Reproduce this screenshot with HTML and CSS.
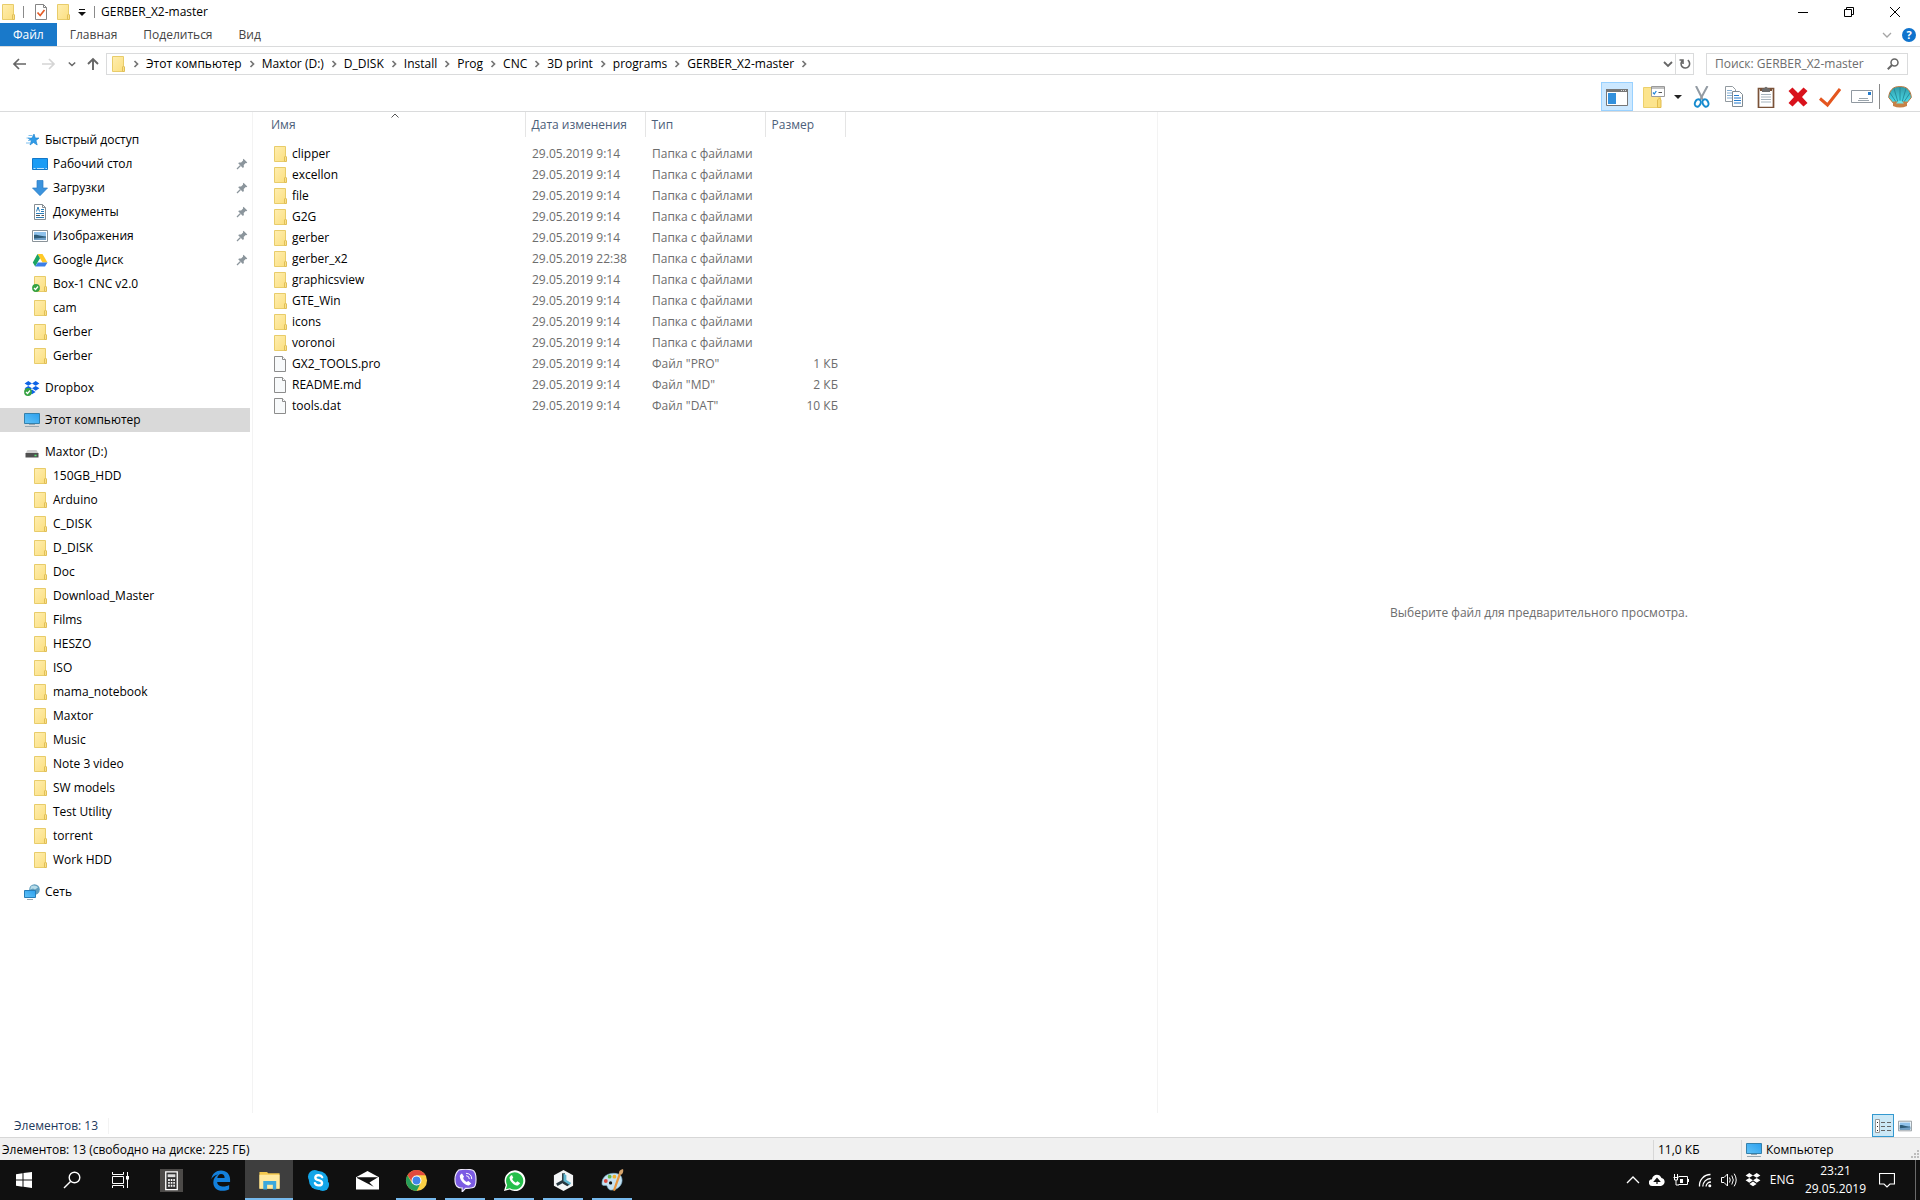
FILE: index.html
```html
<!DOCTYPE html>
<html lang="ru">
<head>
<meta charset="utf-8">
<title>GERBER_X2-master</title>
<link rel="stylesheet" href="styles.css">
</head>
<body>
<svg class="sprite" aria-hidden="true">
  <defs>
    <linearGradient id="g-folder" x1="0" y1="0" x2="1" y2="1"><stop offset="0" stop-color="#ffeeb0"/><stop offset="1" stop-color="#fbdf80"/></linearGradient>
    <linearGradient id="g-screen" x1="0" y1="1" x2="1" y2="0"><stop offset="0" stop-color="#62c3f7"/><stop offset="1" stop-color="#2b9fee"/></linearGradient>
    <linearGradient id="g-shell" x1="0" y1="0" x2="0" y2="1"><stop offset="0" stop-color="#2f9aa8"/><stop offset="1" stop-color="#4fe3f0"/></linearGradient>
  </defs>
  <symbol id="i-folder" viewBox="0 0 16 16"><path d="M2.500.5h11v15h-11z" fill="url(#g-folder)" stroke="#e8cc6a"/><path d="M12.500 15.500v-4.500l1-1 1 1v4.500z" fill="#fbe08a" stroke="#e0bf57"/></symbol>
  <symbol id="i-file" viewBox="0 0 16 16"><path d="M2.500.5h8l3 3v12h-11z" fill="#f8fafb" stroke="#8c8c8c"/><path d="M10.500.5v3h3" fill="#fff" stroke="#8c8c8c"/></symbol>
  <symbol id="i-star" viewBox="0 0 16 16"><path d="M10 2l1.300 4H15l-3 2.500 1.200 4.500-3.700-2.500L6 13l1.300-4.200L4 6.200l4-.1z" fill="#2f9be8" stroke="#1580cc" stroke-width=".6"/><path d="M4.500 3.500h4M2.500 6h3M4 8.500h2.500M2 11h4.500" stroke="#7fc0ef"/></symbol>
  <symbol id="i-desktop" viewBox="0 0 16 16"><path d="M.5 2.500h15v11H.5z" fill="#1a9cf5" stroke="#1277c8"/><path d="M1.500 12.500h2M5 12.500h7M13.500 12.500h1.500" stroke="#bfe3fb"/></symbol>
  <symbol id="i-down" viewBox="0 0 16 16"><path d="M5 .5h6v7.500h4.500L8 15.700.5 8H5z" fill="#3b93dd" stroke="#2a7cc4" stroke-width=".7"/></symbol>
  <symbol id="i-doc" viewBox="0 0 16 16"><path d="M2.500.5h8l3 3v12h-11z" fill="#fff" stroke="#858d92"/><path d="M10.500.5v3h3" fill="none" stroke="#858d92"/><path d="M4.500 7.500L6 3l1.500 4.500M9 5.500h3M9 7.500h3M4 9.500h8M4 13.500h8" stroke="#2b7db8" fill="none"/><path d="M4 11.500h4M9.500 11.500H12" stroke="#555"/></symbol>
  <symbol id="i-pic" viewBox="0 0 16 16"><path d="M.5 2.500h15v11H.5z" fill="#fff" stroke="#8a9399"/><path d="M2 4h12v8H2z" fill="#8fc1ea"/><path d="M2 7c3-1 5 1 12 1.500V12H2z" fill="#2d5b78"/><path d="M2 10.500l12-1V12H2z" fill="#70a0c8"/></symbol>
  <symbol id="i-drive" viewBox="0 0 16 16"><path d="M5.500 2h5l5 8.500h-5z" fill="#ffc928"/><path d="M5.500 2L8 6.300 3.200 14.500.8 10.500z" fill="#1ba462"/><path d="M5.800 10.500h9.700L13 14.500H3.200z" fill="#3b7ee8"/></symbol>
  <symbol id="i-pin" viewBox="0 0 12 12"><path d="M7.500.8l3.800 3.800-1 .6-.6-.1-2 2 .2 2-1 .9L2.200 5.300l.9-.9 2 .2 2-2-.2-.8z" fill="#8b959c"/><path d="M4.500 7.500L1 11" stroke="#8b959c" stroke-width="1.300"/></symbol>
  <symbol id="i-ok" viewBox="0 0 16 16"><circle cx="4" cy="12" r="3.900" fill="#36a243"/><path d="M2 12l1.500 1.500L6 10.500" stroke="#fff" stroke-width="1.300" fill="none"/></symbol>
  <symbol id="i-boxes" viewBox="0 0 16 16"><path d="M4.300 1L8 3.400 4.300 5.800.6 3.400zM11.700 1l3.700 2.400-3.700 2.400L8 3.400zM4.300 6L8 8.300l-3.700 2.400L.6 8.300zM11.700 6l3.700 2.300-3.700 2.400L8 8.300zM8 9.600l3.600 2.300L8 14.300l-3.600-2.400z" fill="currentColor"/></symbol>
  <symbol id="i-pc" viewBox="0 0 16 16"><path d="M.5 1.500h15v10H.5z" fill="url(#g-screen)" stroke="#3580ab"/><path d="M5 12.500h6M1 14.500h14" stroke="#98a7b0"/></symbol>
  <symbol id="i-hdd" viewBox="0 0 16 16"><path d="M3.500 6h9l2 3.500h-13z" fill="#cfcfcf"/><path d="M1.500 9h13v4.500h-13z" fill="#505050"/><path d="M10.500 11.500h2" stroke="#52f070" stroke-width="1.500"/></symbol>
  <symbol id="i-net" viewBox="0 0 16 16"><circle cx="10.500" cy="5.500" r="5.300" fill="#5f9dbd"/><path d="M7 2.500c2-2 6-1 7 1l-3 2-2-1-3 1z" fill="#b7dce9"/><path d="M.5 6.500h11v7H.5z" fill="url(#g-screen)" stroke="#267db7"/><path d="M3 15.500h6" stroke="#98a7b0"/></symbol>
  <symbol id="i-chev" viewBox="0 0 8 8"><path d="M2.500 1l3 3-3 3" fill="none" stroke="#757575" stroke-width="1.700"/></symbol>
  <symbol id="i-chevdown" viewBox="0 0 10 10"><path d="M1 3l4 4 4-4" fill="none" stroke="currentColor" stroke-width="1.800"/></symbol>
</svg>

<header class="titlebar">
  <div class="quick">
    <svg class="ic"><use href="#i-folder"/></svg>
    <i class="tick"></i>
    <button class="bare" aria-label="Свойства"><svg class="ic" viewBox="0 0 16 16"><path d="M2.500.5h8l3 3v12h-11z" fill="#fff" stroke="#858585"/><path d="M10.500.5v3h3" fill="none" stroke="#858585"/><path d="M4.500 8.500l2.700 3L11.500 6" fill="none" stroke="#e45b26" stroke-width="1.700"/></svg></button>
    <button class="bare" aria-label="Новая папка"><svg class="ic"><use href="#i-folder"/></svg></button>
    <button class="bare" aria-label="Настройка панели"><svg class="ic10" viewBox="0 0 10 10"><path d="M2 2.500h6" stroke="#111"/><path d="M1 5h8L5 9z" fill="#111"/></svg></button>
    <i class="tick"></i>
  </div>
  <h1>GERBER_X2-master</h1>
  <div class="winbtns">
    <button aria-label="Свернуть"><svg viewBox="0 0 10 10"><path d="M0 5.500h10" stroke="#000"/></svg></button>
    <button aria-label="Восстановить"><svg viewBox="0 0 10 10"><path d="M.5 2.500h7v7h-7zM2.500 2.500v-2h7v7h-2" fill="none" stroke="#000"/></svg></button>
    <button aria-label="Закрыть"><svg viewBox="0 0 10 10"><path d="M0 0l10 10M10 0L0 10" stroke="#000"/></svg></button>
  </div>
</header>

<nav class="tabs">
  <button class="tab active">Файл</button>
  <button class="tab">Главная</button>
  <button class="tab">Поделиться</button>
  <button class="tab">Вид</button>
  <div class="help">
    <button class="bare pale" aria-label="Развернуть ленту"><svg class="ic10" viewBox="0 0 10 10"><path d="M1 3l4 4 4-4" fill="none" stroke="#a5a5a5" stroke-width="1.300"/></svg></button>
    <button class="qmark" aria-label="Справка">?</button>
  </div>
</nav>

<div class="navrow">
  <button class="bare arrow" aria-label="Назад"><svg viewBox="0 0 14 12"><path d="M7 1L2 6l5 5M2 6h12" fill="none" stroke="#666" stroke-width="1.700"/></svg></button>
  <button class="bare arrow" aria-label="Вперед"><svg viewBox="0 0 14 12"><path d="M7 1l5 5-5 5M12 6H0" fill="none" stroke="#d5d5d5" stroke-width="1.700"/></svg></button>
  <button class="bare recent" aria-label="Последние"><svg viewBox="0 0 10 10"><use href="#i-chevdown"/></svg></button>
  <button class="bare up" aria-label="Вверх"><svg viewBox="0 0 12 14"><path d="M1 7l5-5 5 5M6 2v11" fill="none" stroke="#666" stroke-width="1.900"/></svg></button>
  <div class="address">
    <svg class="ic"><use href="#i-folder"/></svg>
    <svg class="chev"><use href="#i-chev"/></svg>
    <a href="#">Этот компьютер</a><svg class="chev"><use href="#i-chev"/></svg>
    <a href="#">Maxtor (D:)</a><svg class="chev"><use href="#i-chev"/></svg>
    <a href="#">D_DISK</a><svg class="chev"><use href="#i-chev"/></svg>
    <a href="#">Install</a><svg class="chev"><use href="#i-chev"/></svg>
    <a href="#">Prog</a><svg class="chev"><use href="#i-chev"/></svg>
    <a href="#">CNC</a><svg class="chev"><use href="#i-chev"/></svg>
    <a href="#">3D print</a><svg class="chev"><use href="#i-chev"/></svg>
    <a href="#">programs</a><svg class="chev"><use href="#i-chev"/></svg>
    <a href="#">GERBER_X2-master</a><svg class="chev"><use href="#i-chev"/></svg>
    <div class="addrbtns">
      <button class="bare drop" aria-label="Предыдущие расположения"><svg class="ic10"><use href="#i-chevdown"/></svg></button>
      <button class="bare refresh" aria-label="Обновить"><svg viewBox="0 0 12 12"><path d="M8.800 2.200A4.300 4.300 0 1 1 3.500 2.500M4 6V2H.5" fill="none" stroke="#666" stroke-width="1.600"/></svg></button>
    </div>
  </div>
  <div class="search">
    <input type="search" aria-label="Поиск" placeholder="Поиск: GERBER_X2-master">
    <svg class="lens" viewBox="0 0 12 12"><circle cx="7.500" cy="4.500" r="3.500" fill="none" stroke="#666" stroke-width="1.500"/><path d="M5 7L.8 11.200" stroke="#666" stroke-width="2"/></svg>
  </div>
</div>

<div class="toolbar">
  <button class="tool pressed" aria-label="Область навигации"><svg viewBox="0 0 22 18"><path d="M.5 1.500h21v16H.5z" fill="#fff" stroke="#777"/><path d="M0 1h22v3H0z" fill="#777"/><path d="M15 2.500h5" stroke="#ddd" stroke-dasharray="1 1"/><path d="M2 5h8v11H2z" fill="#3290dc"/></svg></button>
  <button class="tool" aria-label="Параметры"><svg viewBox="0 0 22 22"><path d="M.5 1.500h12l1 9 4 1v10H.5z" fill="#fce48d" stroke="#ecd06c"/><path d="M14.500 21.500V14l2-2 1.500 2v7.500z" fill="#f8dc77" stroke="#e2bc50"/><path d="M8.500.5h13v10h-13z" fill="#fff" stroke="#9b9b9b"/><path d="M8 2h14" stroke="#858585"/><path d="M10 6.500l1.300 1.500 2-3" fill="none" stroke="#2788d8" stroke-width="1.300"/><path d="M15.500 6.500h3.500" stroke="#555"/></svg></button>
  <button class="tool caret" aria-label="Еще"><svg viewBox="0 0 8 4"><path d="M0 0h8L4 4z" fill="#222"/></svg></button>
  <button class="tool" aria-label="Вырезать"><svg viewBox="0 0 22 22"><path d="M5 0l7 14M16.500 0L9 14" stroke="#939ba3" stroke-width="2"/><ellipse cx="6.800" cy="17" rx="2.800" ry="3.800" transform="rotate(25 6.800 17)" fill="none" stroke="#168bcf" stroke-width="2"/><ellipse cx="14.500" cy="17" rx="2.800" ry="3.800" transform="rotate(-25 14.500 17)" fill="none" stroke="#168bcf" stroke-width="2"/></svg></button>
  <button class="tool" aria-label="Копировать"><svg viewBox="0 0 22 22"><path d="M2.500.5h7l3 3v12h-10z" fill="#fff" stroke="#929aa0"/><path d="M4 4.500h5M4 7h6M4 9.500h6M4 12h6" stroke="#83aed3"/><path d="M9.500 5.500h7l3 3v12h-10z" fill="#fff" stroke="#7f8a92"/><path d="M11 9.500h5M11 12h7M11 14.500h7M11 17h7" stroke="#257bcb"/></svg></button>
  <button class="tool" aria-label="Вставить"><svg viewBox="0 0 22 22"><path d="M3.500 2.500h15v19h-15z" fill="#fff" stroke="#7a5238" stroke-width="1.700"/><path d="M5 3h12v2H5z" fill="#7a5238"/><path d="M6 8.500h10M6 11h10M6 13.500h10M6 16h10" stroke="#a8b5bf"/><path d="M7 6V2.500h2Q11-1 13 2.500h2V6z" fill="#6d6d6d"/></svg></button>
  <button class="tool" aria-label="Удалить"><svg viewBox="0 0 22 22"><path d="M1.500 5L5.500 1.500l5.500 5.500 5.500-5.500L20.500 5 15 11l5.500 6-4 3.500-5.500-5.500-5.500 5.500L1.500 17 7 11z" fill="#d9121c"/></svg></button>
  <button class="tool" aria-label="Свойства"><svg viewBox="0 0 22 22"><path d="M1 12.500L8.500 19 21 3" fill="none" stroke="#e4561f" stroke-width="3"/></svg></button>
  <button class="tool" aria-label="Отправить"><svg viewBox="0 0 22 22"><path d="M.5 4.500h21v12H.5z" fill="#fff" stroke="#9098a0"/><path d="M17 6h3v3h-3z" fill="#257bcb"/><path d="M8 12.500h9M7 14.500h11" stroke="#9aa4ac"/></svg></button>
  <i class="divider"></i>
  <button class="tool" aria-label="Classic Shell"><svg class="shell" viewBox="0 0 24 22"><path d="M12 .7C5 0 1 5 .7 11.500L6 18h12l5.300-6.500C23 5 19 0 12 .7z" fill="url(#g-shell)" stroke="#ba743b"/><path d="M12 18V1M10.500 18L6 2.500M13.500 18L18 2.500M9.500 18L2 7M14.500 18L22 7" stroke="#21808f" stroke-width=".8"/><path d="M5 15.500h14V20q-7 3-14 0z" fill="#c78146"/><path d="M8 17.500q4-6 8 0z" fill="#6be9ee"/></svg></button>
</div>

<main class="content">
  <aside class="tree">
    <a class="node root" href="#"><svg class="ic"><use href="#i-star"/></svg>Быстрый доступ</a>
    <a class="node" href="#"><svg class="ic"><use href="#i-desktop"/></svg>Рабочий стол<svg class="pin"><use href="#i-pin"/></svg></a>
    <a class="node" href="#"><svg class="ic"><use href="#i-down"/></svg>Загрузки<svg class="pin"><use href="#i-pin"/></svg></a>
    <a class="node" href="#"><svg class="ic"><use href="#i-doc"/></svg>Документы<svg class="pin"><use href="#i-pin"/></svg></a>
    <a class="node" href="#"><svg class="ic"><use href="#i-pic"/></svg>Изображения<svg class="pin"><use href="#i-pin"/></svg></a>
    <a class="node" href="#"><svg class="ic"><use href="#i-drive"/></svg>Google Диск<svg class="pin"><use href="#i-pin"/></svg></a>
    <a class="node" href="#"><svg class="ic"><use href="#i-folder"/><use href="#i-ok"/></svg>Box-1 CNC v2.0</a>
    <a class="node" href="#"><svg class="ic"><use href="#i-folder"/></svg>cam</a>
    <a class="node" href="#"><svg class="ic"><use href="#i-folder"/></svg>Gerber</a>
    <a class="node" href="#"><svg class="ic"><use href="#i-folder"/></svg>Gerber</a>
    <a class="node root gap" href="#"><svg class="ic blue"><use href="#i-boxes"/><use href="#i-ok"/></svg>Dropbox</a>
    <a class="node root gap selected" href="#"><svg class="ic"><use href="#i-pc"/></svg>Этот компьютер</a>
    <a class="node root gap" href="#"><svg class="ic"><use href="#i-hdd"/></svg>Maxtor (D:)</a>
    <a class="node" href="#"><svg class="ic"><use href="#i-folder"/></svg>150GB_HDD</a>
    <a class="node" href="#"><svg class="ic"><use href="#i-folder"/></svg>Arduino</a>
    <a class="node" href="#"><svg class="ic"><use href="#i-folder"/></svg>C_DISK</a>
    <a class="node" href="#"><svg class="ic"><use href="#i-folder"/></svg>D_DISK</a>
    <a class="node" href="#"><svg class="ic"><use href="#i-folder"/></svg>Doc</a>
    <a class="node" href="#"><svg class="ic"><use href="#i-folder"/></svg>Download_Master</a>
    <a class="node" href="#"><svg class="ic"><use href="#i-folder"/></svg>Films</a>
    <a class="node" href="#"><svg class="ic"><use href="#i-folder"/></svg>HESZO</a>
    <a class="node" href="#"><svg class="ic"><use href="#i-folder"/></svg>ISO</a>
    <a class="node" href="#"><svg class="ic"><use href="#i-folder"/></svg>mama_notebook</a>
    <a class="node" href="#"><svg class="ic"><use href="#i-folder"/></svg>Maxtor</a>
    <a class="node" href="#"><svg class="ic"><use href="#i-folder"/></svg>Music</a>
    <a class="node" href="#"><svg class="ic"><use href="#i-folder"/></svg>Note 3 video</a>
    <a class="node" href="#"><svg class="ic"><use href="#i-folder"/></svg>SW models</a>
    <a class="node" href="#"><svg class="ic"><use href="#i-folder"/></svg>Test Utility</a>
    <a class="node" href="#"><svg class="ic"><use href="#i-folder"/></svg>torrent</a>
    <a class="node" href="#"><svg class="ic"><use href="#i-folder"/></svg>Work HDD</a>
    <a class="node root gap" href="#"><svg class="ic"><use href="#i-net"/></svg>Сеть</a>
  </aside>

  <section class="files">
    <table>
      <colgroup><col class="c-name"><col class="c-date"><col class="c-type"><col class="c-size"></colgroup>
      <thead><tr><th class="sorted">Имя<svg class="sort" viewBox="0 0 8 5"><path d="M.5 4.500L4 1l3.500 3.500" fill="none" stroke="#555"/></svg></th><th>Дата изменения</th><th>Тип</th><th>Размер</th></tr></thead>
      <tbody>
        <tr><td><svg class="ic"><use href="#i-folder"/></svg>clipper</td><td>29.05.2019 9:14</td><td>Папка с файлами</td><td></td></tr>
        <tr><td><svg class="ic"><use href="#i-folder"/></svg>excellon</td><td>29.05.2019 9:14</td><td>Папка с файлами</td><td></td></tr>
        <tr><td><svg class="ic"><use href="#i-folder"/></svg>file</td><td>29.05.2019 9:14</td><td>Папка с файлами</td><td></td></tr>
        <tr><td><svg class="ic"><use href="#i-folder"/></svg>G2G</td><td>29.05.2019 9:14</td><td>Папка с файлами</td><td></td></tr>
        <tr><td><svg class="ic"><use href="#i-folder"/></svg>gerber</td><td>29.05.2019 9:14</td><td>Папка с файлами</td><td></td></tr>
        <tr><td><svg class="ic"><use href="#i-folder"/></svg>gerber_x2</td><td>29.05.2019 22:38</td><td>Папка с файлами</td><td></td></tr>
        <tr><td><svg class="ic"><use href="#i-folder"/></svg>graphicsview</td><td>29.05.2019 9:14</td><td>Папка с файлами</td><td></td></tr>
        <tr><td><svg class="ic"><use href="#i-folder"/></svg>GTE_Win</td><td>29.05.2019 9:14</td><td>Папка с файлами</td><td></td></tr>
        <tr><td><svg class="ic"><use href="#i-folder"/></svg>icons</td><td>29.05.2019 9:14</td><td>Папка с файлами</td><td></td></tr>
        <tr><td><svg class="ic"><use href="#i-folder"/></svg>voronoi</td><td>29.05.2019 9:14</td><td>Папка с файлами</td><td></td></tr>
        <tr><td><svg class="ic"><use href="#i-file"/></svg>GX2_TOOLS.pro</td><td>29.05.2019 9:14</td><td>Файл "PRO"</td><td>1 КБ</td></tr>
        <tr><td><svg class="ic"><use href="#i-file"/></svg>README.md</td><td>29.05.2019 9:14</td><td>Файл "MD"</td><td>2 КБ</td></tr>
        <tr><td><svg class="ic"><use href="#i-file"/></svg>tools.dat</td><td>29.05.2019 9:14</td><td>Файл "DAT"</td><td>10 КБ</td></tr>
      </tbody>
    </table>
  </section>

  <section class="preview"><p>Выберите файл для предварительного просмотра.</p></section>
</main>

<div class="details">
  <span class="count">Элементов: 13</span>
  <button class="view on" aria-label="Таблица"><svg viewBox="0 0 16 14"><path d="M.5.500h4v13h-4z" fill="#fff" stroke="#999"/><path d="M2 3.500h1M2 7.500h1M2 11.500h1" stroke="#222"/><path d="M6 3.500h10M6 7.500h10M6 11.500h10" stroke="#666" stroke-dasharray="4 2"/></svg></button>
  <button class="view" aria-label="Крупные значки"><svg viewBox="0 2 16 12"><use href="#i-pic" width="16" height="16"/></svg></button>
</div>

<footer class="statusbar">
  <span class="free">Элементов: 13 (свободно на диске: 225 ГБ)</span>
  <span class="size">11,0 КБ</span>
  <span class="zone"><svg class="ic"><use href="#i-pc"/></svg>Компьютер<svg class="grip" viewBox="0 0 10 10"><path d="M8 0h2v2H8zM5 3h2v2H5zM8 3h2v2H8zM2 6h2v2H2zM5 6h2v2H5zM8 6h2v2H8z" fill="#bdbdbd"/></svg></span>
</footer>

<nav class="taskbar">
  <div class="system">
    <button aria-label="Пуск"><svg viewBox="0 0 24 24"><path d="M4 6.300l6.500-1v6.200H4zM11.500 5.100L20 4v7.500h-8.500zM4 12.500h6.500v6.200L4 17.700zM11.500 12.500H20V20l-8.500-1.200z" fill="#fff"/></svg></button>
    <button aria-label="Поиск"><svg viewBox="0 0 24 24"><circle cx="14.500" cy="9.500" r="5.300" fill="none" stroke="#fff" stroke-width="1.400"/><path d="M10.500 13.500L4 20" stroke="#fff" stroke-width="1.500"/></svg></button>
    <button aria-label="Представление задач"><svg viewBox="0 0 24 24"><path d="M4.500 8.500h11v7h-11zM4.500 4v2.500h11V4M4.500 20v-2.500h11V20M19.500 4v16" fill="none" stroke="#fff"/><path d="M18 8h3v3.500h-3z" fill="#fff"/></svg></button>
  </div>
  <div class="apps">
    <button aria-label="Калькулятор"><svg viewBox="0 0 24 24"><path d="M0 0h24v24H0z" fill="#4c4a48"/><path d="M6 3h12v18.500H6z" fill="#333" stroke="#fff" stroke-width="1.400"/><path d="M8 5.500h8v3H8z" fill="#ddd"/><path d="M8.500 11.500h7M8.500 14.500h7M8.500 17.500h7" stroke="#fff" stroke-width="2" stroke-dasharray="1.700 1"/></svg></button>
    <button aria-label="Edge"><svg viewBox="0 0 24 24"><path d="M2.500 10.500C3.500 4.500 7.500 1.500 12.500 1.500c6 0 9.500 4 9.500 9.500v2.500H8.500c.3 3.500 3.500 4.800 6.500 4.800 2.300 0 4.300-.6 6-1.600v4.500c-2 1.100-4.500 1.600-7 1.600-6 0-9.500-3.800-9.500-8.800 0-3.700 2-6.700 5-8.200-3 .5-5.500 2.200-7 4.700zM8.700 9.500h7.600c0-2.800-1.300-4.200-3.600-4.200s-3.700 1.800-4 4.200z" fill="#1380dc"/></svg></button>
    <button class="current" aria-label="Проводник"><svg viewBox="0 0 24 24"><path d="M1.500 3h8l1 1.500h12v16h-21z" fill="#f3c84d"/><path d="M1.500 6h21v14.500h-21z" fill="#ffe9a0"/><path d="M5.500 12.500h13.500v9h-3.500v-5h-6v5h-4z" fill="#3ba8dc"/></svg></button>
    <button aria-label="Skype"><svg viewBox="0 0 24 24"><circle cx="8" cy="8" r="7" fill="#12a5e8"/><circle cx="16.500" cy="16.500" r="6.500" fill="#12a5e8"/><circle cx="12" cy="12" r="10" fill="#12a5e8"/><path d="M15.800 8.500C14.500 5.500 8.700 6 8.700 9c0 3.300 7 1.900 7 5.500 0 3.300-6.300 3.500-7.400.3" fill="none" stroke="#fff" stroke-width="2.500" stroke-linecap="round"/></svg></button>
    <button aria-label="Почта"><svg viewBox="0 0 24 24"><path d="M0 8.500L12 2l12 6.500v13H0z" fill="#fff"/><path d="M1 8.500h22L14 14l4.500 4.500L1 9.500z" fill="#111"/></svg></button>
    <button class="running" aria-label="Chrome"><svg viewBox="0 0 24 24"><circle cx="12" cy="12" r="11" fill="#fbd045"/><path d="M2.500 6.500A11 11 0 0 1 21.500 6.500H12L8 14z" fill="#e24a3d"/><path d="M2.500 6.500l5 8.500 8 1.500L12 23A11 11 0 0 1 2.500 6.500z" fill="#279e5a"/><circle cx="12" cy="12" r="5.200" fill="#fff"/><circle cx="12" cy="12" r="4.100" fill="#4285e8"/></svg></button>
    <button class="running" aria-label="Viber"><svg viewBox="0 0 24 24"><path d="M5 1q7-1.500 14 0 4 1.200 4 10t-4 8.500q-4 1-7 .7L8.500 24v-4.200Q5 20 3 18 1 16 1 10.500T5 1z" fill="#7b5be3" stroke="#efeafa" stroke-width="1.200"/><path d="M7.500 5L6 7c0 5 5 9.500 9.500 10.300L18 15l-3-2.500-2 1q-3-1.300-3.500-4.200L10.500 8 8.500 5z" fill="#fff"/><path d="M12.500 4.500q6 .3 6 6M12.700 7q3.300.2 3.300 3.500" fill="none" stroke="#fff"/></svg></button>
    <button class="running" aria-label="WhatsApp"><svg viewBox="0 0 24 24"><path d="M1 23l1.800-6A10.800 10.800 0 1 1 7 21.500z" fill="#fff"/><path d="M3 21l1.300-4.200A9 9 0 1 1 7.300 20z" fill="#25bf4b"/><path d="M8.500 6.500L6.800 8.500c0 4.500 5 8.800 8.700 8.800l2.500-2.500-3-2-1.700 1.500q-2.600-1-3.800-3.800l1.200-1.500-1.200-2.500z" fill="#fff"/></svg></button>
    <button class="running" aria-label="CAM"><svg viewBox="0 0 24 24"><path d="M12 1l10 5.500v11L12 23 2 17.500v-11z" fill="#f2f4f5"/><path d="M12 4.500v8M12 12.500l-7 4" stroke="#26373f" stroke-width="3" fill="none"/><path d="M12 4.500l3 2v5l5 3-2 2.500-6-4z" fill="#5db6d0"/><path d="M12 12.500l6 4-2 1.500-5-3z" fill="#26373f"/></svg></button>
    <button class="running" aria-label="Paint"><svg viewBox="0 0 24 24"><path d="M1 15C1 8 7 4.500 13 4.500S22 7 22 12s-5 10-11 10c-4 0-4-3.500-5-4.500S1 18.500 1 15z" fill="#c5e2f2" stroke="#73a9c8" stroke-width=".7"/><circle cx="5" cy="12.500" r="2" fill="#d94a3e"/><circle cx="9" cy="8" r="2" fill="#65b848"/><circle cx="14" cy="8" r="2" fill="#f1b22c"/><circle cx="10" cy="14.500" r="1.700" fill="#111"/><path d="M20 4l-6.500 18.500" stroke="#e8963e" stroke-width="2.300"/><path d="M19 5q-1-4 4-5 1 4-2 6z" fill="#d4a36c"/></svg></button>
  </div>
  <div class="tray">
    <button aria-label="Скрытые значки"><svg viewBox="0 0 16 16"><path d="M2 11l6-6 6 6" fill="none" stroke="#fff" stroke-width="1.300"/></svg></button>
    <button aria-label="Облако"><svg viewBox="0 0 16 16"><path d="M3.500 14a3.400 3.400 0 0 1-.5-6.800C3.500 1.500 11 1.200 12.500 6c4 .5 4.500 7-.5 8z" fill="#fff"/><path d="M8 12V8M5.500 9.300L8 6.500l2.500 2.800z" stroke="#111" stroke-width="1.200"/></svg></button>
    <button aria-label="Питание"><svg viewBox="0 0 16 16"><path d="M5.500 4.500h9v8h-9M15.500 7v3" fill="none" stroke="#fff"/><path d="M7 7h3v4H7z" fill="#fff"/><path d="M1.500 2v3M4.500 2v3M.5 5.500h5M1.500 5.500v2.500h3V5.500M3 8v5h3" fill="none" stroke="#fff"/></svg></button>
    <button aria-label="Сеть"><svg viewBox="0 0 16 16"><path d="M2.500 14.500A11 11 0 0 1 13.500 2.500M5.800 14.500a8 8 0 0 1 8-8M9 14.500a5 5 0 0 1 5-4.500" fill="none" stroke="#fff" stroke-width="1.300"/><circle cx="12.800" cy="13.700" r="1.500" fill="#fff"/></svg></button>
    <button aria-label="Громкость"><svg viewBox="0 0 16 16"><path d="M.5 5.500H3L6.500 2v12L3 10.500H.5z" fill="none" stroke="#fff"/><path d="M8.500 5.500q1.500 2.500 0 5M10.800 3.500q3 4.500 0 9M13.200 1.700q4 6.300 0 12.600" fill="none" stroke="#fff"/></svg></button>
    <button aria-label="Dropbox"><svg viewBox="0 0 16 16"><use href="#i-boxes"/></svg></button>
    <button class="lang">ENG</button>
    <button class="clock"><time>23:21</time><time>29.05.2019</time></button>
    <button class="notes" aria-label="Уведомления"><svg viewBox="0 0 16 16"><path d="M.5 1.500h15v10.500H11l-3 3-3-3H.5z" fill="none" stroke="#fff" stroke-width="1.200"/></svg></button>
    <i class="peek"></i>
  </div>
</nav>
</body>
</html>
```
FILE: styles.css
```css
* { box-sizing: border-box; }

:root {
  --line: #dadbdc;
  --faint: #f3f3f3;
  --muted: #6d6d6d;
  --head: #4c607a;
}

body {
  display: flex;
  flex-direction: column;
  min-height: 100vh;
  margin: 0;
  background: #fff;
  color: #000;
  font: 12px/16px "Open Sans", "Noto Sans", sans-serif;
}

button, input { font: inherit; color: inherit; }
button { display: flex; align-items: center; justify-content: center; padding: 0; border: 0; background: none; }
a { color: inherit; text-decoration: none; }
svg { display: block; flex: none; }
.sprite { position: absolute; width: 0; height: 0; }
.ic { width: 16px; height: 16px; }
.ic10 { width: 10px; height: 10px; }
.blue { color: #0e63e6; }

/* title bar */
.titlebar { display: flex; align-items: center; height: 23px; }
.quick { display: flex; align-items: center; gap: 6px; }
.tick { width: 1px; height: 12px; margin: 0 3px 0 1px; background: #8a8a8a; }
.titlebar h1 { margin: 0; padding-left: 3px; font-size: 12px; font-weight: 400; }
.winbtns { display: flex; margin-left: auto; padding-right: 2px; }
.winbtns button { width: 46px; height: 20px; }
.winbtns svg { width: 10px; height: 10px; }

/* ribbon tabs */
.tabs { display: flex; height: 24px; border-bottom: 1px solid var(--line); }
.tab { padding: 0 13px; color: #444; }
.tab.active { background: #1979ca; color: #fff; }
.help { display: flex; align-items: center; gap: 10px; margin-left: auto; padding-right: 4px; }
.qmark { width: 14px; height: 14px; border-radius: 50%; background: #0f73cd; color: #fff; font-weight: 700; font-size: 11px; }

/* navigation row */
.navrow { display: flex; align-items: center; height: 34px; padding: 0 12px; color: #666; }
.arrow { width: 14px; margin-right: 16px; }
.arrow svg { width: 14px; height: 12px; }
.recent { width: 8px; margin-left: -4px; }
.recent svg { width: 8px; height: 8px; }
.up { width: 12px; margin: 0 7px 0 11px; }
.up svg { width: 12px; height: 14px; }
.address { display: flex; flex: 1; align-items: center; gap: 6px; height: 22px; padding-left: 3px; border: 1px solid var(--line); color: #000; }
.chev { width: 8px; height: 8px; }
.addrbtns { display: flex; margin-left: auto; color: #666; }
.drop { width: 14px; }
.refresh { width: 18px; height: 20px; border-left: 1px solid var(--line); }
.refresh svg { width: 12px; height: 12px; }
.search { display: flex; align-items: center; width: 202px; height: 22px; margin-left: 12px; padding: 0 8px; border: 1px solid var(--line); }
.search input { flex: 1; min-width: 0; padding: 0; border: 0; outline: 0; background: none; }
.search input::placeholder { color: var(--muted); opacity: 1; }
.lens { width: 12px; height: 12px; }

/* command toolbar */
.toolbar { display: flex; align-items: center; justify-content: flex-end; gap: 10px; height: 31px; padding: 1px 8px 0 0; border-bottom: 1px solid var(--line); }
.tool svg { width: 22px; height: 22px; }
.tool .shell { width: 24px; }
.tool.pressed { width: 32px; height: 29px; border: 1px solid #99d1ff; background: #cce8ff; }
.tool.pressed svg { height: 18px; }
.tool.caret { margin: 0 -1px; }
.tool.caret svg { width: 8px; height: 4px; }
.divider { width: 1px; height: 25px; margin: 0 -2px 0 -4px; background: #8a8a8a; }

/* navigation tree */
.content { display: flex; flex: 1; }
.tree { width: 253px; padding: 16px 2px 0 0; border-right: 1px solid var(--faint); }
.node { display: flex; align-items: center; gap: 5px; height: 24px; padding: 0 2px 0 32px; }
.node.root { padding-left: 24px; }
.node.gap { margin-top: 8px; }
.node.selected { background: #d9d9d9; }
.pin { width: 12px; height: 12px; margin-left: auto; }

/* file table */
.files { flex: 1; padding-left: 10px; }
table { width: 582px; border-collapse: collapse; table-layout: fixed; color: var(--muted); }
.c-name { width: 262px; }
.c-date, .c-type { width: 120px; }
.c-size { width: 80px; }
th { position: relative; height: 25px; padding: 0 0 0 6px; border-right: 1px solid #e5e5e5; color: var(--head); font-weight: 400; text-align: left; }
th:first-child { padding-left: 8px; }
.sort { position: absolute; top: 1px; left: 128px; width: 8px; height: 5px; }
tbody::before { content: ""; display: block; height: 6px; }
td { height: 21px; padding: 0 0 0 7px; }
td:first-child { display: flex; align-items: center; gap: 4px; padding-left: 9px; color: #000; }
td:last-child { padding-right: 7px; text-align: right; }

.preview { display: flex; flex: none; align-items: center; justify-content: center; width: 40%; max-width: 763px; border-left: 1px solid var(--faint); color: var(--muted); }
.preview p { margin: 0; }

/* details line and status bar */
.details { display: flex; align-items: center; height: 24px; padding: 1px 4px 0 14px; }
.count { margin-right: auto; padding-right: 10px; border-right: 1px solid var(--faint); color: #1e395b; }
.view { width: 22px; height: 23px; }
.view svg { width: 14px; height: 12px; }
.view.on { border: 1px solid #3399d0; background: #cbe8f6; }
.view.on svg { width: 16px; height: 14px; }
.statusbar { display: flex; align-items: center; height: 23px; padding-top: 1px; border-top: 1px solid #d7d7d7; background: #f0f0f0; }
.free { flex: 1; padding-left: 2px; }
.size, .zone { display: flex; align-items: center; gap: 4px; height: 20px; padding-left: 4px; border-left: 1px solid #d7d7d7; }
.size { width: 88px; }
.zone { width: 179px; }
.grip { width: 10px; height: 10px; margin: auto 1px 0 auto; }

/* taskbar */
.taskbar { display: flex; height: 40px; background: #101010; color: #fff; }
.system, .apps, .tray { display: flex; }
.system button { width: 48px; height: 40px; }
.taskbar svg { width: 24px; height: 24px; }
.apps { padding-left: 3px; }
.apps svg { width: 23px; height: 23px; }
.apps button { width: 40px; height: 40px; margin: 0 5px 0 4px; border-bottom: 2px solid transparent; border-top: 2px solid transparent; }
.apps .running { border-bottom-color: #76b9ed; }
.apps .current { width: 48px; margin: 0 1px 0 0; border-bottom-color: #76b9ed; background: #3e3e3e; }
.tray { align-items: center; margin-left: auto; }
.tray button { width: 24px; height: 40px; }
.tray svg { width: 16px; height: 16px; }
.tray .lang { width: 34px; }
.tray .clock { flex-direction: column; width: 73px; line-height: 18px; }
.tray .notes { width: 30px; }
.peek { width: 5px; height: 40px; margin-left: 13px; border-left: 1px solid #6a6a6a; }
```
